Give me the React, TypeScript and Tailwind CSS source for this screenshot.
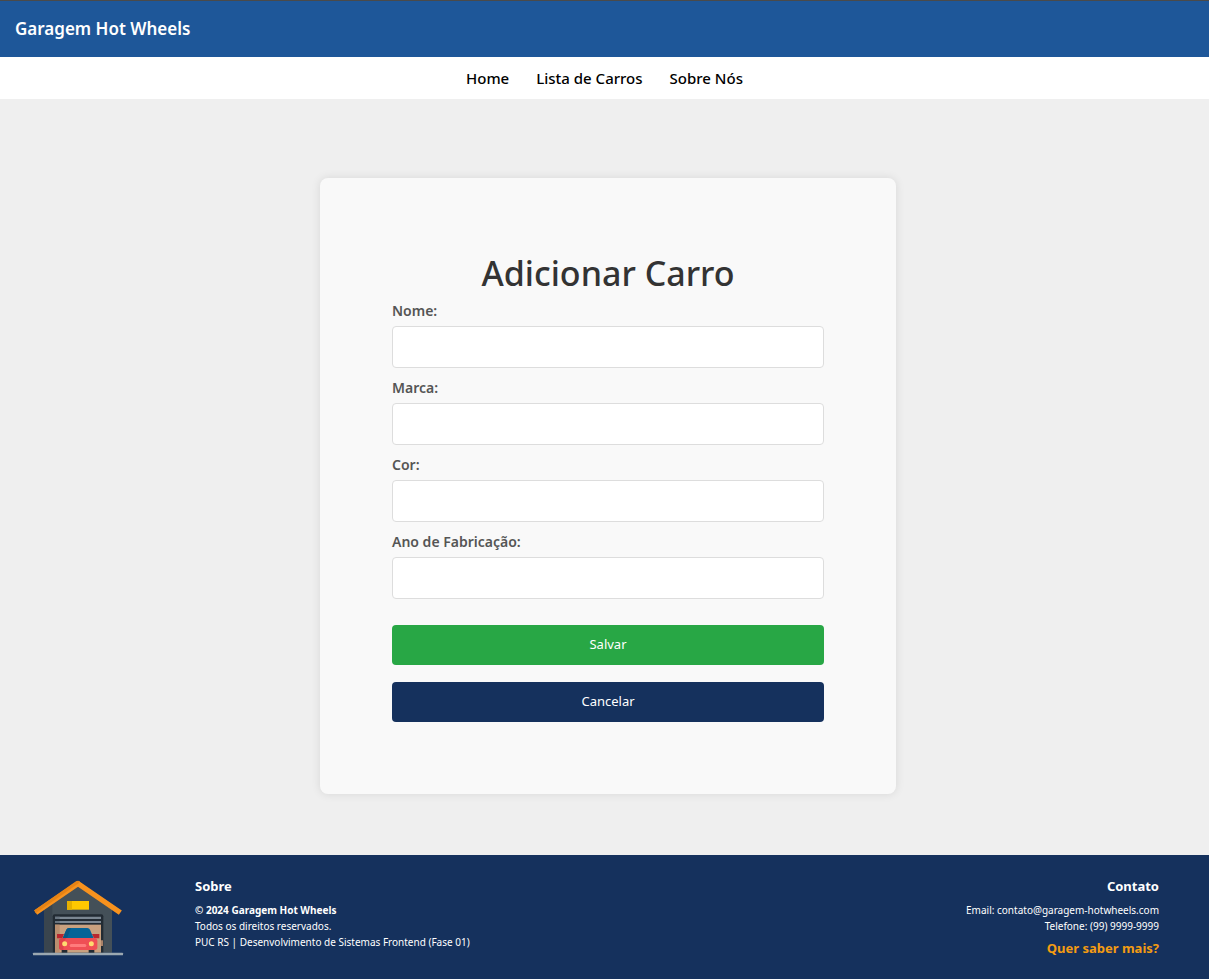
import React from "react";

const navLinks = ["Home", "Lista de Carros", "Sobre Nós"];

const fields = [
  { id: "nome", label: "Nome:" },
  { id: "marca", label: "Marca:" },
  { id: "cor", label: "Cor:" },
  { id: "ano", label: "Ano de Fabricação:" },
];

function GarageLogo() {
  return (
    <svg viewBox="36 30 276 228" className="h-[76px] w-[92px] shrink-0" role="img" aria-label="Garagem">
      <path d="M72 248V114L174 44L276 114V248Z" fill="#445058" />
      <path d="M72 248V114L97 97V248Z" fill="#3a454e" />
      <path d="M47 128L174 41L301 128" fill="none" stroke="#f7921e" strokeWidth="16" strokeLinejoin="round" />
      <path d="M43 121L168 34Q174 30 180 34L174 41L60 121L47 130Z" fill="#e68314" />
      <rect x="141" y="93" width="66" height="26" fill="#ffc800" />
      <rect x="141" y="93" width="15" height="26" fill="#e6b000" />
      <path d="M98 248V139Q98 133 104 133H244Q250 133 250 139V248Z" fill="#222b33" />
      <rect x="105" y="164" width="138" height="84" fill="#c9a17f" />
      <path d="M105 164H119V248H105Z" fill="#b98f6f" />
      <path d="M105 140H243V147H105ZM105 153H243V159H105Z" fill="#7b8792" />
      <path d="M105 140H119V147H105ZM105 153H119V159H105Z" fill="#68747f" />
      <path d="M243 211H249V228H243Z" fill="#a98168" />
      <path d="M125 235H142V249H125ZM206 235H223V249H206Z" fill="#222b33" />
      <path d="M111 192H132L127 205H111ZM216 192H238V205H222Z" fill="#b9272e" />
      <path d="M127 207L139 179Q141 174 147 174H202Q208 174 210 179L222 207Z" fill="#056497" />
      <path d="M139 179Q141 174 147 174H153L140 207H127Z" fill="#075886" />
      <path d="M127 204H222Q232 204 232 214V232Q232 240 224 240H125Q117 240 117 232V214Q117 204 127 204Z" fill="#ef4f55" />
      <path d="M127 204H139Q130 212 130 240H125Q117 240 117 232V214Q117 204 127 204Z" fill="#df4149" />
      <circle cx="134" cy="221" r="7.5" fill="#ffda70" />
      <circle cx="214" cy="221" r="7.5" fill="#ffda70" />
      <rect x="149" y="222" width="50" height="9" rx="4.5" fill="#ff7b7c" />
      <rect x="39" y="248" width="270" height="8" rx="2" fill="#9ba8b1" />
    </svg>
  );
}

export default function App() {
  return (
    <div className="flex min-h-screen flex-col bg-[#efefef] font-['Noto_Sans','Open_Sans',sans-serif]">
      <header className="flex h-[57px] items-center border-t border-[#4a4a4a] bg-[#1e5799] px-[15px]">
        <span className="text-[17px] leading-6 font-semibold text-white">Garagem Hot Wheels</span>
      </header>

      <nav className="flex h-[42px] items-center justify-center gap-[27px] bg-white">
        {navLinks.map((link) => (
          <a key={link} href="#" className="text-[15px] leading-6 font-medium text-black">
            {link}
          </a>
        ))}
      </nav>

      <main className="flex grow flex-col items-center pt-[79px] pb-[61px] pl-[7px]">
        <form
          className="flex w-full max-w-[576px] flex-col rounded-lg bg-[#f9f9f9] p-[72px] shadow-[0_0_10px_rgba(0,0,0,0.1)]"
          onSubmit={(event) => event.preventDefault()}
        >
          <h1 className="pb-1 text-center text-[34px] leading-[46px] font-medium text-[#333333]">Adicionar Carro</h1>
          <div className="flex flex-col gap-[9px]">
            {fields.map((field) => (
              <div key={field.id} className="flex flex-col gap-1">
                <label htmlFor={field.id} className="text-[14px] leading-[22px] font-semibold text-[#555555]">
                  {field.label}
                </label>
                <input
                  id={field.id}
                  type="text"
                  className="h-[42px] w-full rounded-[4px] border border-[#dddddd] bg-white px-3 text-sm text-[#333333]"
                />
              </div>
            ))}
          </div>
          <div className="flex flex-col gap-[17px] pt-[26px]">
            <button type="submit" className="h-10 rounded-[4px] bg-[#28a745] text-[13px] text-white">
              Salvar
            </button>
            <button type="button" className="h-10 rounded-[4px] bg-[#15315d] text-[13px] text-white">
              Cancelar
            </button>
          </div>
        </form>
      </main>

      <footer className="flex h-[124px] items-start bg-[#15315d] pr-[50px] pl-8 text-white">
        <div className="pt-[25px]">
          <GarageLogo />
        </div>
        <section className="pt-5 pl-[71px] text-[10px] leading-4">
          <h2 className="mb-[5px] text-[13px] leading-[22px] font-bold">Sobre</h2>
          <p className="font-bold">© 2024 Garagem Hot Wheels</p>
          <p>Todos os direitos reservados.</p>
          <p>PUC RS | Desenvolvimento de Sistemas Frontend (Fase 01)</p>
        </section>
        <section className="ml-auto pt-5 text-right text-[10px] leading-4">
          <h2 className="mb-[5px] text-[13px] leading-[22px] font-bold">Contato</h2>
          <p>Email: contato@garagem-hotwheels.com</p>
          <p>Telefone: (99) 9999-9999</p>
          <a href="#" className="mt-[3px] block text-[13px] leading-[22px] font-bold text-[#f39c12]">
            Quer saber mais?
          </a>
        </section>
      </footer>
    </div>
  );
}
